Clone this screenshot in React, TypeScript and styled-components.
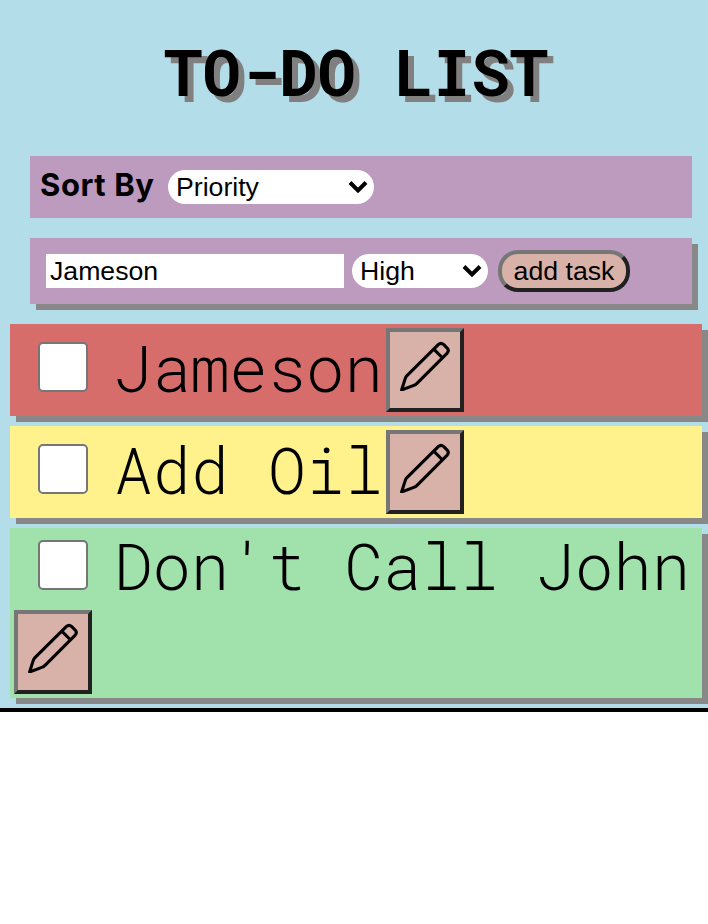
import React from "react";
import styled, { createGlobalStyle } from "styled-components";

const GlobalStyle = createGlobalStyle`
  * { box-sizing: border-box; }
  body { margin: 0; background: #fff; }
`;

const mono = `"Roboto Mono", "Liberation Mono", monospace`;
const sans = `"Liberation Sans", Arial, sans-serif`;

const Page = styled.main`
  width: 708px;
  height: 712px;
  background: #b2dde9;
  border-bottom: 4px solid #000;
  overflow: hidden;
  display: flex;
  flex-direction: column;
`;

const Title = styled.h1`
  margin: 0;
  height: 156px;
  padding: 29px 0 0 4px;
  text-align: center;
  font: 700 64px/84px ${mono};
  text-shadow: 6px 6px 0 #808080;
`;

const Bar = styled.section<{ $height: number; $raised?: boolean }>`
  display: flex;
  align-items: center;
  flex: none;
  height: ${(p) => p.$height}px;
  margin: 0 16px 20px 30px;
  background: #bc9bbe;
  box-shadow: ${(p) => (p.$raised ? "6px 6px 0 #888" : "none")};
`;

const SortLabel = styled.span`
  width: 138px;
  padding: 0 0 4px 10px;
  font: 700 31px/40px Inter, sans-serif;
  letter-spacing: 0.6px;
  white-space: nowrap;
`;

const SelectBox = styled.div<{ $width: number }>`
  display: flex;
  align-items: center;
  justify-content: space-between;
  width: ${(p) => p.$width}px;
  height: 34px;
  padding: 0 6px 0 8px;
  border-radius: 17px;
  background: #fff;
  font: 26.67px/34px ${sans};
`;

const TaskInput = styled.input`
  width: 298px;
  height: 34px;
  margin: 0 8px 0 16px;
  padding: 0 4px;
  border: 0;
  background: #fff;
  color: #000;
  font: 26.67px/34px ${sans};
`;

const AddButton = styled.button`
  width: 132px;
  height: 42px;
  margin-left: 10px;
  padding: 0;
  border: 4px solid;
  border-color: #767676 #212121 #212121 #767676;
  border-radius: 20px;
  background: #d8b1a8;
  color: #000;
  font: 26.67px/34px ${sans};
`;

const List = styled.ul`
  display: flex;
  flex-direction: column;
  gap: 10px;
  margin: 0 6px 0 10px;
  padding: 0;
  list-style: none;
`;

const Item = styled.li<{ $color: string; $tall?: boolean }>`
  display: flex;
  flex-wrap: wrap;
  align-items: flex-start;
  align-content: flex-start;
  height: ${(p) => (p.$tall ? 170 : 92)}px;
  padding: ${(p) => (p.$tall ? 0 : 4)}px 0 0 4px;
  background: ${(p) => p.$color};
  box-shadow: 6px 6px 0 #888;
`;

const Check = styled.input<{ $tall?: boolean }>`
  appearance: none;
  width: 50px;
  height: 50px;
  margin: ${(p) => (p.$tall ? 12 : 14)}px 26px 0 24px;
  border: 2px solid #767676;
  border-radius: 5px;
  background: #fff;
`;

const TaskName = styled.span<{ $tall?: boolean }>`
  height: 82px;
  font: 300 64px/${(p) => (p.$tall ? 74 : 78)}px ${mono};
  margin-right: ${(p) => (p.$tall ? 0 : 3.2)}px;
  white-space: pre;
`;

const EditButton = styled.button`
  display: flex;
  width: 78px;
  height: 84px;
  margin: 0;
  padding: 9px 10px;
  border: 4px solid;
  border-color: #767676 #212121 #212121 #767676;
  background: #d8b1a8;
`;

const Chevron = () => (
  <svg width="20" height="14" viewBox="0 0 20 14" fill="none" stroke="#000" strokeWidth="4">
    <path d="M2 2.5 10 10.5 18 2.5" />
  </svg>
);

const Pencil = () => (
  <svg width="50" height="50" viewBox="0 0 50 50" fill="none" stroke="#000" strokeWidth="3.1" strokeLinejoin="round">
    <path d="M1.6 49 5.2 37.6Q5.7 35.9 7 34.6L38.5 3.4Q41 1.2 43.5 3.4L47.2 7.1Q49.4 9.6 47.2 12.1L17 42.4Q15.6 43.8 13.8 44.4ZM33.8 8.1 42.6 17" />
  </svg>
);

const tasks = [
  { name: "Jameson", color: "#d66d6b" },
  { name: "Add Oil", color: "#fff28d" },
  { name: "Don't Call John", color: "#a0e1ac", tall: true },
];

export default function App() {
  return (
    <>
      <GlobalStyle />
      <Page>
        <Title>TO-DO LIST</Title>
        <Bar $height={62}>
          <SortLabel>Sort By</SortLabel>
          <SelectBox $width={206}>Priority<Chevron /></SelectBox>
        </Bar>
        <Bar $height={66} $raised>
          <TaskInput defaultValue="Jameson" aria-label="Task" />
          <SelectBox $width={136}>High<Chevron /></SelectBox>
          <AddButton>add task</AddButton>
        </Bar>
        <List>
          {tasks.map((t) => (
            <Item key={t.name} $color={t.color} $tall={t.tall}>
              <Check type="checkbox" $tall={t.tall} aria-label={t.name} />
              <TaskName $tall={t.tall}>{t.name}</TaskName>
              <EditButton aria-label="Edit"><Pencil /></EditButton>
            </Item>
          ))}
        </List>
      </Page>
    </>
  );
}
